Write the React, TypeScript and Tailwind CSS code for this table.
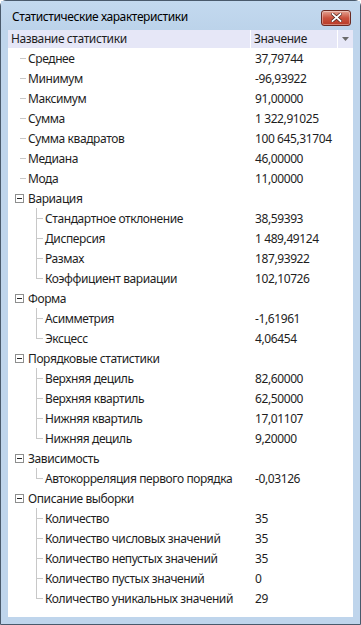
import React from "react";

type Row = { kind: "top" | "group" | "child"; name: string; value?: string; last?: boolean };

const rows: Row[] = [
  { kind: "top", name: "Среднее", value: "37,79744" },
  { kind: "top", name: "Минимум", value: "-96,93922" },
  { kind: "top", name: "Максимум", value: "91,00000" },
  { kind: "top", name: "Сумма", value: "1 322,91025" },
  { kind: "top", name: "Сумма квадратов", value: "100 645,31704" },
  { kind: "top", name: "Медиана", value: "46,00000" },
  { kind: "top", name: "Мода", value: "11,00000" },
  { kind: "group", name: "Вариация" },
  { kind: "child", name: "Стандартное отклонение", value: "38,59393" },
  { kind: "child", name: "Дисперсия", value: "1 489,49124" },
  { kind: "child", name: "Размах", value: "187,93922" },
  { kind: "child", name: "Коэффициент вариации", value: "102,10726", last: true },
  { kind: "group", name: "Форма" },
  { kind: "child", name: "Асимметрия", value: "-1,61961" },
  { kind: "child", name: "Эксцесс", value: "4,06454", last: true },
  { kind: "group", name: "Порядковые статистики" },
  { kind: "child", name: "Верхняя дециль", value: "82,60000" },
  { kind: "child", name: "Верхняя квартиль", value: "62,50000" },
  { kind: "child", name: "Нижняя квартиль", value: "17,01107" },
  { kind: "child", name: "Нижняя дециль", value: "9,20000", last: true },
  { kind: "group", name: "Зависимость" },
  { kind: "child", name: "Автокорреляция первого порядка", value: "-0,03126", last: true },
  { kind: "group", name: "Описание выборки" },
  { kind: "child", name: "Количество", value: "35" },
  { kind: "child", name: "Количество числовых значений", value: "35" },
  { kind: "child", name: "Количество непустых значений", value: "35" },
  { kind: "child", name: "Количество пустых значений", value: "0" },
  { kind: "child", name: "Количество уникальных значений", value: "29", last: true },
];

function TreeRow({ r }: { r: Row }) {
  return (
    <div className="relative flex h-[20px] items-center">
      <div className="flex h-full w-[246px] shrink-0 items-center">
        {r.kind === "top" && (
          <>
            <div className="ml-[12px] h-px w-[6px] bg-[#c8c8c8]" />
            <span className="ml-[2px] pt-[1px]">{r.name}</span>
          </>
        )}
        {r.kind === "group" && (
          <>
            <div className="ml-[7px] flex h-[9px] w-[9px] items-center justify-center border border-[#8e8f8f] bg-white">
              <div className="h-px w-[5px] bg-[#222]" />
            </div>
            <span className="ml-[4px] pt-[1px]">{r.name}</span>
          </>
        )}
        {r.kind === "child" && (
          <>
            <div className="relative ml-[28px] h-[20px] w-[7px]">
              <div
                className={
                  "absolute left-0 top-0 w-px bg-[#c8c8c8] " + (r.last ? "h-[10px]" : "h-[20px]")
                }
              />
              <div className="absolute left-0 top-[10px] h-px w-[7px] bg-[#c8c8c8]" />
            </div>
            <span className="ml-[2px] pt-[1px]">{r.name}</span>
          </>
        )}
      </div>
      {r.value !== undefined && <span className="ml-[1px] pt-[1px]">{r.value}</span>}
    </div>
  );
}

export default function App() {
  return (
    <div
      className="flex h-[625px] w-[361px] flex-col rounded-t-[6px] border border-[#4a5a6c] bg-[#bfd5ec] text-[12px] tracking-[-0.4px] text-[#1e1e1e]"
      style={{ fontFamily: '"Noto Sans", "Open Sans", sans-serif' }}
    >
      <div className="flex h-[29px] shrink-0 items-center bg-gradient-to-b from-[#c3d9ef] to-[#bcd3ea] pl-[11px] pr-[9px]">
        <span className="mt-[2px] text-[12px] text-black">Статистические характеристики</span>
        <div className="ml-auto mt-[4px] flex h-[16px] w-[30px] items-center justify-center rounded-[3px] border border-[#6b2a22] bg-gradient-to-b from-[#e3a393] via-[#c9523e] to-[#b93a25] shadow-[inset_0_0_0_1px_rgba(255,255,255,0.35)]">
          <svg width="11" height="9" viewBox="0 0 11 9">
            <path d="M1.5 1 L9.5 8 M9.5 1 L1.5 8" stroke="#4a2018" strokeWidth="3.2" strokeLinecap="square" />
            <path d="M1.5 1 L9.5 8 M9.5 1 L1.5 8" stroke="#ffffff" strokeWidth="1.8" strokeLinecap="square" />
          </svg>
        </div>
      </div>
      <div className="mx-[7px] mb-[7px] flex flex-1 flex-col bg-white">
        <div className="flex h-[18px] shrink-0 items-center bg-[#e6e7f7] text-[#1e1e1e]">
          <div className="flex h-full w-[243px] items-center border-r border-white pl-[3px]">Название статистики</div>
          <div className="flex h-full flex-1 items-center pl-[3px]">Значение</div>
          <div className="flex h-full w-[16px] items-center justify-center border-l border-white">
            <svg width="7" height="4" viewBox="0 0 7 4">
              <path d="M0 0 L7 0 L3.5 4 Z" fill="#6a6a6a" />
            </svg>
          </div>
        </div>
        <div className="flex flex-col">
          {rows.map((r, i) => (
            <TreeRow key={i} r={r} />
          ))}
        </div>
      </div>
    </div>
  );
}
